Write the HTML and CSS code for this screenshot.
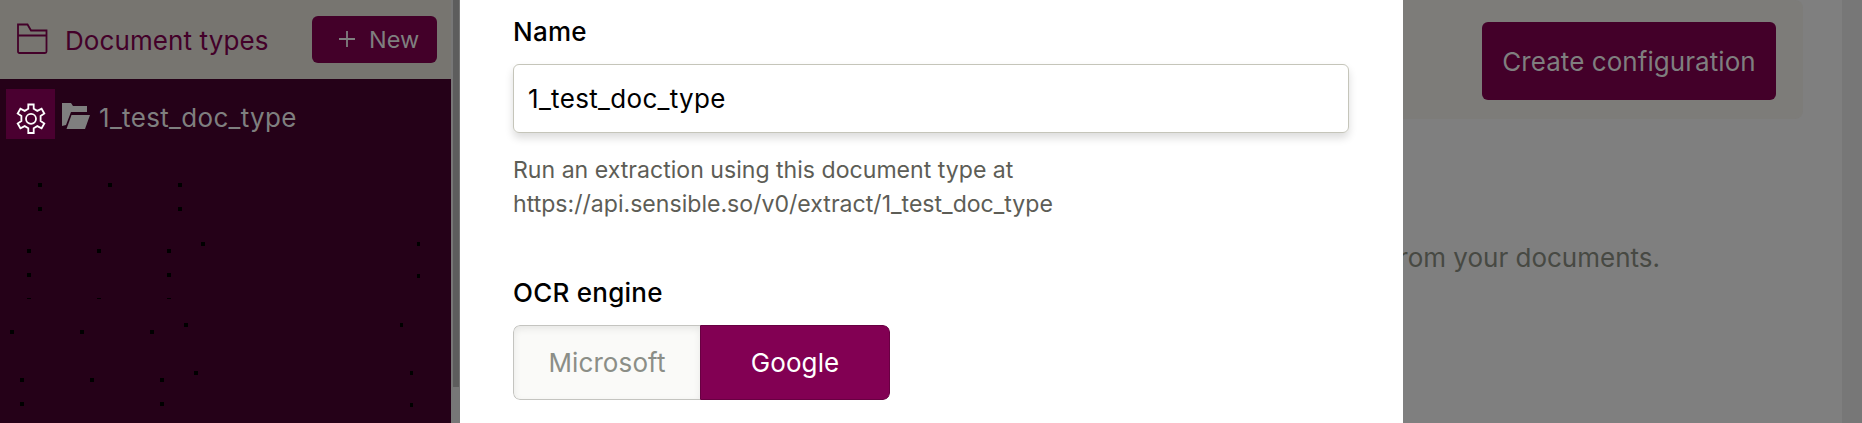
FILE: index.html
```html
<!DOCTYPE html>
<html lang="en">
<head>
<meta charset="utf-8">
<title>Document types</title>
<link rel="stylesheet" href="styles.css">
</head>
<body>
<div class="app">
  <aside class="sidebar">
    <header class="side-head">
      <svg class="folder" viewBox="0 0 32 32" width="32" height="32"><path d="M2 28.500V1.500h9.500l3.500 6H30.500V28.500q0 1.500-1.500 1.500H3.500q-1.500 0-1.500-1.500M2 12.500H30.500"/></svg>
      <h1 class="side-title">Document types</h1>
      <button class="btn btn-new"><svg class="plus" viewBox="0 0 18 18" width="18" height="18"><path d="M9 1v16M1 9h16"/></svg><span>New</span></button>
    </header>
    <div class="side-list">
      <div class="row">
        <div class="gear-box"><svg class="gear" viewBox="0 0 32 32" width="32" height="32"><path d="M13.300 1.500h5.400v4.300l3.600 2.100 4.300-2.100 2.700 4.700-3.700 2.400v5.200l3.700 2.400-2.700 4.700-4.300-2.100-3.600 2.100V30h-5.400v-4.800l-3.600-2.100-4.300 2.100-2.700-4.700 3.700-2.400v-5.200L2.700 10.500l2.700-4.700 4.300 2.100 3.600-2.100z"/><circle cx="16" cy="15.800" r="5"/></svg></div>
        <svg class="open-folder" viewBox="0 0 28 26" width="28" height="26"><path d="M0 0h9l2 3h14v6H9L4 22 0 23z"/><path d="M9.500 12H28l-5 14H4.500z"/></svg>
        <span class="row-name">1_test_doc_type</span>
      </div>
      <svg class="specks" viewBox="0 0 451 273" width="451" height="273"><path d="M38 33h4v4h-4zM108 33h4v4h-4zM178 33h4v4h-4zM38 57h4v4h-4zM178 57h4v4h-4zM27 99h4v4h-4zM97 99h4v4h-4zM167 99h4v4h-4zM201 92h4v4h-4zM27 123h4v4h-4zM167 123h4v4h-4zM27 148h4v1h-4zM97 148h4v1h-4zM167 148h4v1h-4zM10 180h4v4h-4zM80 180h4v4h-4zM150 180h4v4h-4zM184 173h4v4h-4zM20 228h4v4h-4zM90 228h4v4h-4zM160 228h4v4h-4zM194 221h4v4h-4zM20 252h4v4h-4zM160 252h4v4h-4zM417 92h3v4h-3zM417 124h3v4h-3zM400 173h3v4h-3zM410 221h3v4h-3zM410 253h3v4h-3z"/></svg>
    </div>
  </aside>
  <div class="scroll"><div class="thumb"></div></div>
  <section class="modal">
    <label class="label">Name</label>
    <div class="input">1_test_doc_type</div>
    <p class="help">Run an extraction using this document type at<br>https://api.sensible.so/v0/extract/1_test_doc_type</p>
    <div class="label label-ocr">OCR engine</div>
    <div class="toggle"><button class="opt">Microsoft</button><button class="opt opt-on">Google</button></div>
  </section>
  <main class="main">
    <div class="panel"><button class="btn btn-create">Create configuration</button></div>
    <div class="hint"><span>from your documents.</span></div>
  </main>
  <div class="page-scroll"></div>
</div>
</body>
</html>
```
FILE: styles.css
```css
* { box-sizing: border-box; }
body { margin: 0; font-family: Inter, sans-serif; overflow: hidden; }
button { font: inherit; border: 0; padding: 0; }
svg { display: block; flex: none; }
.app { display: flex; width: 1862px; height: 423px; background: #7f7f7f; overflow: hidden; }
.sidebar { width: 451px; flex: none; background: #250118; }
.side-head { height: 79px; display: flex; align-items: center; padding: 0 14px 0 16px; background: #777570; }
.folder { margin-bottom: 2px; fill: none; stroke: #430029; stroke-width: 1.8; }
.side-title { margin: 0 0 0 17px; padding-top: 1px; font-size: 26px; font-weight: 400; letter-spacing: .1px; color: #430029; white-space: nowrap; flex: 1; }
.btn { background: #430029; color: #7f7f7f; border-radius: 6px; }
.btn-new { width: 125px; height: 47px; display: flex; align-items: center; gap: 13px; padding: 0 0 1px 26px; font-size: 23.500px; }
.plus { fill: none; stroke: #7f7f7f; stroke-width: 1.8; }
.row { display: flex; align-items: flex-start; height: 71px; padding: 10px 0 0 6px; color: #7f7f7f; }
.gear-box { width: 49px; height: 50px; padding: 14px 0 0 9px; background: #4a0030; }
.gear { fill: none; stroke: #fff; stroke-width: 1.8; }
.open-folder { margin: 14px 0 0 7px; fill: #7f7f7f; }
.row-name { margin: 13px 0 0 9px; font-size: 26px; line-height: 32px; letter-spacing: .33px; }
.specks { fill: #000; }
.scroll { width: 9px; flex: none; padding: 0 1px 0 2px; background: #777; }
.thumb { height: 387px; background: #5d5d5d; }
.modal { position: relative; width: 943px; flex: none; padding: 16px 54px 0 53px; background: #fff; }
.label { display: block; font-size: 26px; line-height: 32px; font-weight: 500; letter-spacing: .25px; color: #000; }
.input { margin-top: 16px; height: 69px; padding: 0 14px; border: 1px solid #c5c5ba; border-radius: 6px; font-size: 26px; line-height: 68px; letter-spacing: .33px; box-shadow: 0 5px 8px rgba(0,0,0,.14); }
.help { margin: 20px 0 0; font-size: 23.100px; line-height: 34px; color: #5d5d56; white-space: nowrap; }
.label-ocr { margin-top: 56px; }
.toggle { margin-top: 16px; display: flex; width: 377px; height: 75px; border-radius: 7px; overflow: hidden; }
.opt { width: 187px; background: #fafaf8; color: #8b8e87; border: 1px solid #c4c4c0; border-right: 0; border-radius: 7px 0 0 7px; box-shadow: inset 0 3px 7px rgba(0,0,0,.08); font-size: 26px; letter-spacing: .1px; }
.opt-on { width: 190px; background: #820053; color: #fff; border: 1px solid #680042; border-radius: 0 7px 7px 0; box-shadow: none; }
.main { flex: 1; min-width: 0; }
.panel { width: 400px; height: 119px; padding: 22px 27px 0 0; display: flex; justify-content: flex-end; align-items: flex-start; border-radius: 0 8px 8px 0; background: #7d7c79; }
.btn-create { width: 294px; height: 78px; font-size: 26px; letter-spacing: .06px; }
/* the start of the hint runs under the modal */
.hint { width: 257px; padding-top: 123px; display: flex; justify-content: flex-end; font-size: 26px; line-height: 32px; color: #474943; white-space: nowrap; }
.page-scroll { width: 20px; flex: none; background: #777; }
```
